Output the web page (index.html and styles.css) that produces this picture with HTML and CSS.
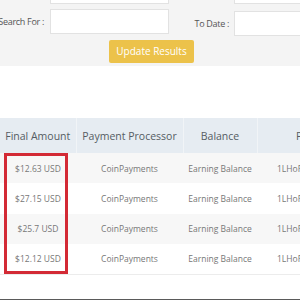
FILE: index.html
```html
<!DOCTYPE html>
<html lang="en">
<head>
    <meta charset="UTF-8">
    <meta name="viewport" content="width=device-width, initial-scale=1.0">
    <title>Withdrawal History</title>
    <link rel="stylesheet" href="styles.css">
</head>
<body>
    <div class="filters">
        <div class="filter-grid">
            <span class="lbl"></span>
            <input type="text" class="field" />
            <span class="lbl"></span>
            <input type="text" class="field" />
            <label class="lbl">Search For :</label>
            <input type="text" class="field" />
            <label class="lbl lbl-low">To Date :</label>
            <input type="text" class="field field-low" />
        </div>
        <div class="btn-row">
            <button class="btn">Update Results</button>
        </div>
    </div>

    <div class="table-wrap">
        <table class="history">
            <thead>
                <tr>
                    <th class="c1">Final Amount</th>
                    <th class="c2">Payment Processor</th>
                    <th class="c3">Balance</th>
                    <th class="c4">Payment Address</th>
                </tr>
            </thead>
            <tbody>
                <tr><td>$12.63 USD</td><td>CoinPayments</td><td>Earning Balance</td><td>1LHoRp5xq9Uu2</td></tr>
                <tr><td>$27.15 USD</td><td>CoinPayments</td><td>Earning Balance</td><td>1LHoRp5xq9Uu2</td></tr>
                <tr><td>$25.7 USD</td><td>CoinPayments</td><td>Earning Balance</td><td>1LHoRp5xq9Uu2</td></tr>
                <tr><td>$12.12 USD</td><td>CoinPayments</td><td>Earning Balance</td><td>1LHoRp5xq9Uu2</td></tr>
            </tbody>
        </table>
        <div class="highlight"></div>
    </div>

    <div class="footer"></div>
</body>
</html>
```

FILE: styles.css
```css
* { margin: 0; padding: 0; box-sizing: border-box; }
html, body { width: 300px; height: 300px; overflow: hidden; }
body { font-family: "Open Sans", Arial, sans-serif; background: #fff; color: #555; }

.filters { background: #f4f4f4; height: 87px; margin-top: -21px; }
.filter-grid { display: grid; grid-template-columns: 64px 119px 65px 140px; row-gap: 3px; margin-left: -14px; align-items: center; }
.lbl { font-size: 9px; letter-spacing: -0.3px; color: #555; text-align: right; padding-right: 6px; white-space: nowrap; }
.lbl-low { padding-right: 5px; margin-top: 3px; }
.field { height: 25px; border: 1px solid #e2e2e2; background: #fff; width: 100%; }
.field-low { margin-top: 4px; }

.btn-row { margin-top: 2px; padding-left: 109px; }
.btn { background: #ecc24a; color: #fff; border: none; border-radius: 2px; font-family: "Open Sans", Arial, sans-serif; font-size: 10px; width: 85px; height: 23px; white-space: nowrap; }

.table-wrap { position: relative; margin-top: 52px; width: 420px; }
.history { border-collapse: collapse; table-layout: fixed; width: 420px; }
.history .c1 { width: 76px; }
.history .c2 { width: 107px; }
.history .c3 { width: 74px; }
.history .c4 { width: 163px; }
.history th { background: #e6ecf2; height: 35px; font-weight: normal; font-size: 10.5px; color: #555c63; border-left: 1px solid #f1f4f7; white-space: nowrap; }
.history th:first-child { border-left: none; }
.history td { height: 30.25px; font-size: 8.5px; color: #777; text-align: center; white-space: nowrap; overflow: hidden; }
.history tbody tr:nth-child(odd) td { background: #f7f7f7; }
.history tbody tr:last-child td { border-bottom: 1px solid #ececec; }
.history td:last-child { text-align: left; padding-left: 20px; }

.highlight { position: absolute; left: 4px; top: 35px; width: 64px; height: 121px; border: 3px solid #d32a35; }

.footer { margin-top: 24px; border-top: 2px solid #5a5a5a; height: 10px; background: #f4f4f4; }
```
